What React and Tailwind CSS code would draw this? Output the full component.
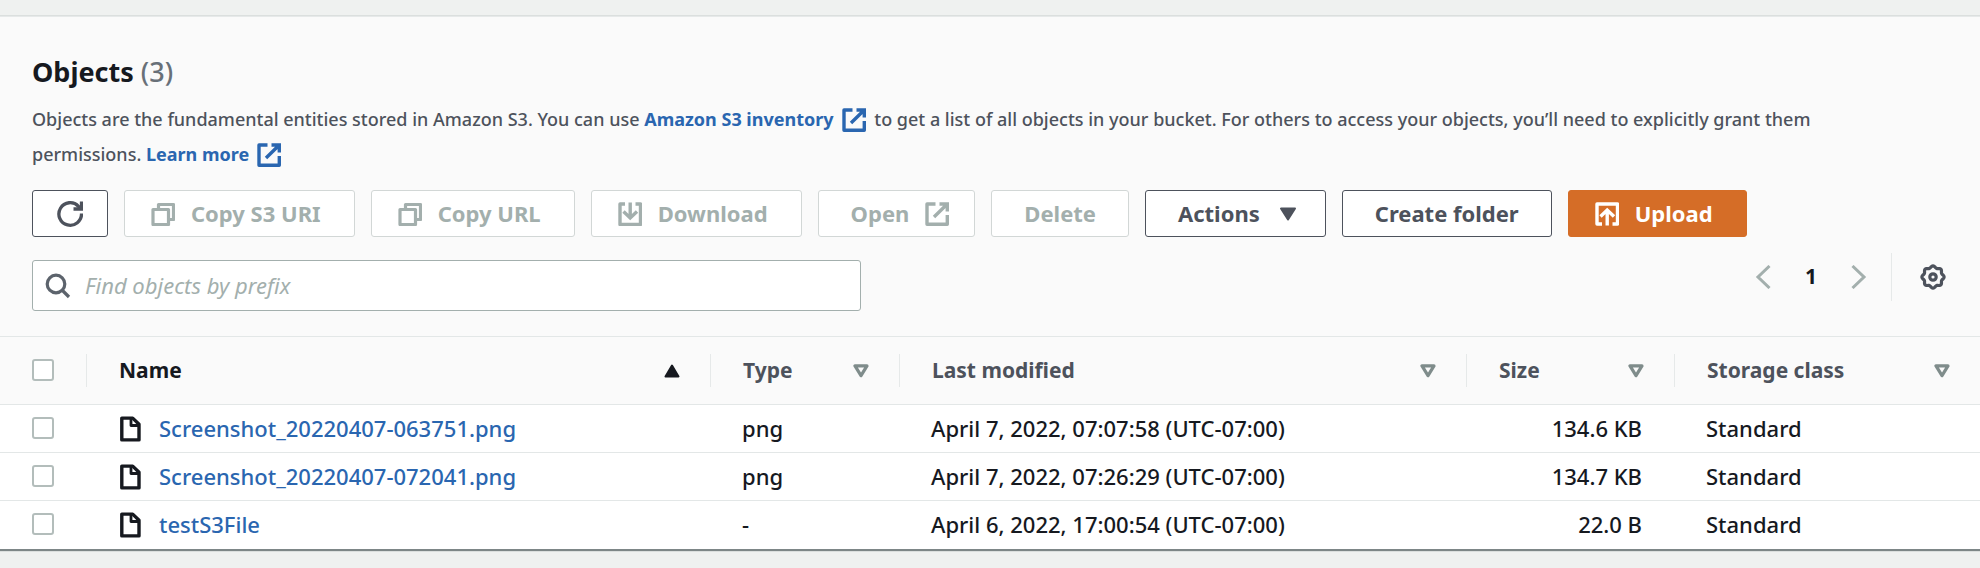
import React from "react";

const objects = [
  { name: "Screenshot_20220407-063751.png", type: "png", modified: "April 7, 2022, 07:07:58 (UTC-07:00)", size: "134.6 KB", storage: "Standard" },
  { name: "Screenshot_20220407-072041.png", type: "png", modified: "April 7, 2022, 07:26:29 (UTC-07:00)", size: "134.7 KB", storage: "Standard" },
  { name: "testS3File", type: "-", modified: "April 6, 2022, 17:00:54 (UTC-07:00)", size: "22.0 B", storage: "Standard" },
];

const columns = ["Name", "Type", "Last modified", "Size", "Storage class"];

function Icon({ children, className = "", width = 3 }) {
  return (
    <svg
      viewBox="0 0 24 24"
      aria-hidden="true"
      fill="none"
      stroke="currentColor"
      strokeWidth={width}
      className={`size-6 shrink-0 ${className}`}
    >
      {children}
    </svg>
  );
}

const CopyIcon = () => (
  <Icon width={3.2}>
    <path strokeLinejoin="round" d="M2 7.5H17.5V22.5H2Z" />
    <path strokeLinejoin="round" d="M7.5 7V2.5H22.5V17.5H18" />
  </Icon>
);

const DownloadIcon = () => (
  <Icon width={3.4}>
    <path strokeLinejoin="round" d="M7 2H2V22.5H22.5V2H17.5" />
    <path d="M12.2 0.5V15M5.5 9.5L12.2 16L19 9.5" />
  </Icon>
);

const UploadIcon = () => (
  <Icon width={3.4}>
    <path strokeLinejoin="round" d="M7 22H2V2H22.5V22H17.5" />
    <path d="M12.2 23.5V9M5.5 14.5L12.2 8L19 14.5" />
  </Icon>
);

const ExternalIcon = ({ className }) => (
  <Icon className={className} width={3.4}>
    <path strokeLinejoin="round" d="M10.5 2H2V22.3H22.3V13" />
    <path d="M14.5 2H22.3V9.5M22 2.3L9 15" />
  </Icon>
);

const RefreshIcon = () => (
  <svg viewBox="0 0 26 26" aria-hidden="true" fill="none" stroke="currentColor" strokeWidth="3.3" className="size-[26px]">
    <path d="M24.5 12.5A11.3 11.3 0 1 1 21.5 5.3L24 8" />
    <path d="M24.5 0.5V8H16.5" />
  </svg>
);

const FileIcon = () => (
  <svg viewBox="0 0 24 26" aria-hidden="true" fill="none" stroke="currentColor" strokeWidth="3.4" strokeLinejoin="round" className="h-[26px] w-6 shrink-0">
    <path d="M3.8 2.1H14.7L21 8.2V23.9H3.8Z" />
    <path strokeWidth="2.8" d="M13 2.1V9.5H20.8" />
  </svg>
);

const gearPath =
  Array.from({ length: 96 }, (_, i) => {
    const a = (i / 96) * Math.PI * 2;
    const r = 10.2 + 0.9 * Math.cos(8 * a);
    return `${i ? "L" : "M"}${(13 + r * Math.cos(a)).toFixed(2)} ${(13 + r * Math.sin(a)).toFixed(2)}`;
  }).join("") + "Z";

const GearIcon = () => (
  <svg viewBox="0 0 26 26" aria-hidden="true" fill="none" stroke="currentColor" strokeWidth="3.2" className="size-[26px]">
    <path d={gearPath} />
    <circle cx="13" cy="13" r="3.2" />
  </svg>
);

function Button({ variant = "normal", start, end, children, ...rest }) {
  const look = {
    normal: "border-[#4d525c] bg-white text-[#4d525c]",
    disabled: "border-[#d2d7d6] bg-white text-[#a3afad]",
    primary: "border-[#d56d27] bg-[#d56d27] text-white",
  }[variant];
  const padding = start ? "pl-[26px] pr-[33px]" : end ? "pl-8 pr-[25px]" : "px-8";
  return (
    <button
      type="button"
      disabled={variant === "disabled"}
      className={`flex h-[47px] items-center gap-4 rounded-[3px] border text-[22px] font-bold whitespace-nowrap ${look} ${padding}`}
      {...rest}
    >
      {start}
      {children}
      {end}
    </button>
  );
}

function Checkbox({ label }) {
  return (
    <input
      type="checkbox"
      aria-label={label}
      className="block size-[22px] appearance-none rounded-[3px] border-2 border-[#b3bdbb] bg-white checked:bg-[#2a66b0]"
    />
  );
}

function SortIcon({ active }) {
  return (
    <svg viewBox="0 0 16 14" aria-hidden="true" className="h-[14px] w-4 shrink-0" strokeLinejoin="round">
      {active ? (
        <path d="M8 1.5L14.5 12.5H1.5Z" fill="#16191f" stroke="#16191f" strokeWidth="2" />
      ) : (
        <path d="M2 1.9H14L8 11.6Z" fill="none" stroke="#7f8c8b" strokeWidth="3.2" />
      )}
    </svg>
  );
}

function HeaderCell({ title, active }) {
  return (
    <th scope="col" aria-sort={active ? "ascending" : "none"} className="p-0 font-bold">
      <button
        type="button"
        className={`flex h-[33px] w-full items-center justify-between border-l border-[#e6e9e9] pr-[30px] pl-8 text-[21px] whitespace-nowrap ${active ? "text-[#16191f]" : "text-[#4d525c]"}`}
      >
        {title}
        <SortIcon active={active} />
      </button>
    </th>
  );
}

const TextLink = ({ children }) => (
  <a href="#" className="font-bold text-[#2a66b0]">
    {children}
    <ExternalIcon className="mr-1 ml-2 inline-block align-[-6px]" />
  </a>
);

export default function App() {
  return (
    <div className="min-h-screen bg-[#eff1f0] pt-4 font-['Noto_Sans',sans-serif] text-[#16191f]">
      <main className="border-t border-[#e6e9e9] bg-[#fafafa] shadow-[0_1px_1px_1px_#7d8687]">
        <header className="px-8 pt-[35px] pb-[25px]">
          <h1 className="text-[27px] leading-10 font-bold">
            Objects <span className="font-medium text-[#687078]">(3)</span>
          </h1>
          <p className="mt-[10px] max-w-[1860px] text-[18px] leading-[35px] font-medium text-[#4d525c]">
            Objects are the fundamental entities stored in Amazon S3. You can use <TextLink>Amazon S3 inventory</TextLink> to get a
            list of all objects in your bucket. For others to access your objects, you’ll need to explicitly grant them permissions.{" "}
            <TextLink>Learn more</TextLink>
          </p>

          <div className="mt-[18px] flex flex-wrap gap-4">
            <button
              type="button"
              aria-label="Refresh"
              className="flex h-[47px] w-[76px] items-center justify-center rounded-[3px] border border-[#4d525c] bg-white text-[#4d525c]"
            >
              <RefreshIcon />
            </button>
            <Button variant="disabled" start={<CopyIcon />}>Copy S3 URI</Button>
            <Button variant="disabled" start={<CopyIcon />}>Copy URL</Button>
            <Button variant="disabled" start={<DownloadIcon />}>Download</Button>
            <Button variant="disabled" end={<ExternalIcon />}>Open</Button>
            <Button variant="disabled">Delete</Button>
            <Button
              aria-haspopup="menu"
              end={
                <Icon width={2}>
                  <path d="M5 6.5H19L12 17.5Z" fill="currentColor" strokeLinejoin="round" />
                </Icon>
              }
            >
              Actions
            </Button>
            <Button>Create folder</Button>
            <Button variant="primary" start={<UploadIcon />}>Upload</Button>
          </div>

          <div className="mt-4 flex items-start justify-between">
            <label className="mt-[7px] flex h-[51px] w-full max-w-[829px] items-center gap-[14px] rounded-[3px] border border-[#a3afad] bg-white px-3">
              <svg viewBox="0 0 26 26" aria-hidden="true" fill="none" stroke="#5c636c" strokeWidth="3.2" className="size-[26px] shrink-0">
                <circle cx="11" cy="11" r="8.8" />
                <path d="M17 17L24 24" />
              </svg>
              <input
                type="search"
                aria-label="Find objects by prefix"
                placeholder="Find objects by prefix"
                className="min-w-0 flex-1 bg-transparent text-[22px] outline-none placeholder:text-[#a3afad] placeholder:italic"
              />
            </label>

            <div className="flex h-12 items-center">
              <nav aria-label="Pagination" className="flex items-center gap-[30px] pr-6">
                <button type="button" disabled aria-label="Previous page" className="text-[#a3afad]">
                  <svg viewBox="0 0 16 24" aria-hidden="true" fill="none" stroke="currentColor" strokeWidth="3" className="h-6 w-4">
                    <path d="M14.5 1L3 12L14.5 23" />
                  </svg>
                </button>
                <button type="button" aria-current="page" className="w-5 text-center text-[21px] font-bold">1</button>
                <button type="button" disabled aria-label="Next page" className="text-[#a3afad]">
                  <svg viewBox="0 0 16 24" aria-hidden="true" fill="none" stroke="currentColor" strokeWidth="3" className="h-6 w-4">
                    <path d="M1.5 1L13 12L1.5 23" />
                  </svg>
                </button>
              </nav>
              <div className="flex h-12 items-center border-l border-[#e6e9e9] pr-[2px] pl-7">
                <button type="button" aria-label="Preferences" className="text-[#4d525c]">
                  <GearIcon />
                </button>
              </div>
            </div>
          </div>
        </header>

        <table className="w-full table-fixed border-collapse text-left">
          <colgroup>
            <col className="w-[86px]" />
            <col className="w-[624px]" />
            <col className="w-[189px]" />
            <col className="w-[567px]" />
            <col className="w-[208px]" />
            <col />
          </colgroup>
          <thead>
            <tr className="h-[68px] border-y border-[#e3e7e7]">
              <th scope="col" className="p-0 pb-[2px] pl-8">
                <Checkbox label="Select all objects" />
              </th>
              {columns.map((title, i) => (
                <HeaderCell key={title} title={title} active={i === 0} />
              ))}
            </tr>
          </thead>
          <tbody className="bg-white text-[22px] font-medium whitespace-nowrap">
            {objects.map((o) => (
              <tr key={o.name} className="h-12 border-b border-[#e3e7e7] last:border-b-0">
                <td className="p-0 pb-[2px] pl-8">
                  <Checkbox label={`Select ${o.name}`} />
                </td>
                <td className="p-0 pl-8">
                  <div className="flex items-center gap-[17px]">
                    <FileIcon />
                    <a href="#" className="text-[#2a66b0]">{o.name}</a>
                  </div>
                </td>
                <td className="p-0 pl-8">{o.type}</td>
                <td className="p-0 pl-8">{o.modified}</td>
                <td className="p-0 pr-8 text-right">{o.size}</td>
                <td className="p-0 pl-8">{o.storage}</td>
              </tr>
            ))}
          </tbody>
        </table>
      </main>
    </div>
  );
}
